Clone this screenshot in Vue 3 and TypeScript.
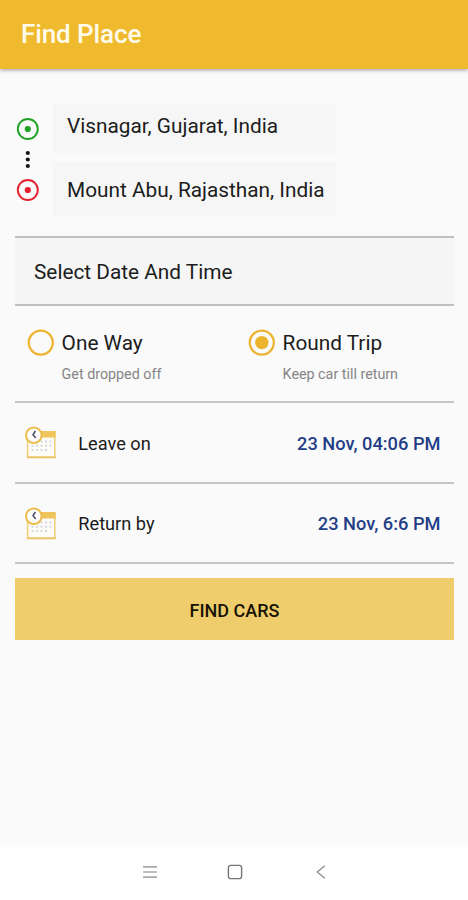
<script setup lang="ts">
import { ref } from 'vue'

interface TripOption { id: string; title: string; hint: string }
interface Schedule { label: string; value: string }

const origin = 'Visnagar, Gujarat, India'
const destination = 'Mount Abu, Rajasthan, India'
const trips: TripOption[] = [
  { id: 'one', title: 'One Way', hint: 'Get dropped off' },
  { id: 'round', title: 'Round Trip', hint: 'Keep car till return' },
]
const schedules: Schedule[] = [
  { label: 'Leave on', value: '23 Nov, 04:06 PM' },
  { label: 'Return by', value: '23 Nov, 6:6 PM' },
]
const selected = ref('round')
const dotColumns = [0, 1, 2, 3, 4]
</script>

<template>
  <div class="screen">
    <header class="bar"><h1>Find Place</h1></header>
    <main>
      <section class="route">
        <svg class="markers" width="26" height="90" viewBox="0 0 26 90">
          <g fill="none" stroke-width="1.9">
            <circle cx="12.8" cy="15" r="10" stroke="#1fa324" />
            <circle cx="12.8" cy="76" r="10" stroke="#e3202b" />
          </g>
          <circle cx="12.8" cy="15" r="3.1" fill="#1fa324" />
          <circle cx="12.8" cy="76" r="3.1" fill="#e3202b" />
          <g fill="#151515">
            <circle cx="12.8" cy="39" r="2.1" />
            <circle cx="12.8" cy="45.5" r="2.1" />
            <circle cx="12.8" cy="52" r="2.1" />
          </g>
        </svg>
        <div class="places">
          <div class="place from"><span>{{ origin }}</span></div>
          <div class="place to"><span>{{ destination }}</span></div>
        </div>
      </section>

      <h2 class="heading"><span>Select Date And Time</span></h2>

      <section class="trips">
        <div v-for="t in trips" :key="t.id" class="trip" @click="selected = t.id">
          <svg width="28" height="28" viewBox="0 0 28 28">
            <circle cx="13.8" cy="13.6" r="12" fill="none" stroke="#ecb432" stroke-width="2.3" />
            <circle v-if="selected === t.id" cx="13.8" cy="13.6" r="6.7" fill="#ecb42c" />
          </svg>
          <div class="trip-text">
            <span class="title">{{ t.title }}</span>
            <span class="hint">{{ t.hint }}</span>
          </div>
        </div>
      </section>

      <section v-for="s in schedules" :key="s.label" class="schedule">
        <svg width="32" height="34" viewBox="0 0 32 34">
          <rect x="2.6" y="6" width="27.2" height="25.5" fill="#fdfcf8" stroke="#efcf7d" stroke-width="1.6" />
          <rect x="2.6" y="5" width="28" height="6.5" fill="#efc45c" />
          <path d="M2 31.2H30.6" stroke="#eac25f" stroke-width="1.6" />
          <g fill="#d5d6e1">
            <template v-for="c in dotColumns" :key="c">
              <rect v-if="c > 1" :x="6.5 + c * 4.5" y="14.5" width="2" height="2" />
              <rect :x="6.5 + c * 4.5" y="18.7" width="2" height="2" />
              <rect v-if="c < 4" :x="6.5 + c * 4.5" y="23" width="2" height="2" />
            </template>
          </g>
          <circle cx="8.8" cy="9.3" r="7.8" fill="#fefefe" stroke="#ecbd4c" stroke-width="2" />
          <path d="M10.4 5L8 8.8L10.8 12" fill="none" stroke="#4b506b" stroke-width="1.5" />
        </svg>
        <span class="label">{{ s.label }}</span>
        <span class="value">{{ s.value }}</span>
      </section>

      <button class="find"><span>FIND CARS</span></button>
    </main>
    <nav class="system">
      <svg width="14" height="14" viewBox="0 0 14 14"><path d="M0 1.8H14M0 7H14M0 12.2H14" stroke="#aaa" stroke-width="1.7" /></svg>
      <svg class="home" width="16" height="16" viewBox="0 0 16 16"><rect x="1.4" y="1.4" width="13.2" height="13.2" rx="2.4" fill="none" stroke="#777" stroke-width="1.4" /></svg>
      <svg class="back" width="10" height="14" viewBox="0 0 10 14"><path d="M8.8 .7L1.3 7L8.8 13.3" fill="none" stroke="#929292" stroke-width="1.4" /></svg>
    </nav>
  </div>
</template>

<style>
body { margin: 0; }
</style>

<style scoped>
.screen {
  width: 468px; height: 900px; display: flex; flex-direction: column;
  background: #fafafa; color: #1c1c1c; font-family: Roboto, "Liberation Sans", sans-serif;
}
.bar {
  height: 69px; flex: none; box-sizing: border-box; padding: 19px 21px 0;
  background: #efba2d; box-shadow: 0 1px 4px rgba(60, 55, 75, .5);
}
h1 { margin: 0; font-size: 26px; line-height: 30px; font-weight: 500; color: #fffbea; letter-spacing: -.1px; }
main { flex: 1; padding: 35px 14px 0 15px; }
.route { display: flex; height: 132px; }
.markers { margin-top: 10px; flex: none; }
.places { margin-left: 12px; display: flex; flex-direction: column; gap: 9px; width: 283px; }
.place { background: #f6f6f6; padding-left: 14px; font-size: 20.8px; white-space: nowrap; }
.from { height: 49px; line-height: 45px; }
.to { height: 54px; line-height: 57px; }
.heading {
  margin: 0; height: 70px; box-sizing: border-box; border: solid #c0c0c0; border-width: 2px 0;
  background: #f5f5f5; font-size: 20.8px; font-weight: 400; line-height: 68px; padding-left: 19px;
}
.trips {
  height: 97px; box-sizing: border-box; border-bottom: 2px solid #c5c5c5; display: grid;
  grid-template-columns: 221px 1fr; padding: 23px 0 0 12px;
}
.trip { display: flex; gap: 6.6px; }
.trip-text { display: flex; flex-direction: column; white-space: nowrap; }
.title { font-size: 20.8px; line-height: 29px; }
.hint { font-size: 14.3px; line-height: 18px; margin-top: 7px; color: #858585; }
.schedule {
  height: 80.5px; box-sizing: border-box; border-bottom: 2px solid #c5c5c5;
  display: flex; align-items: center; padding: 2px 13.5px 0 10px;
}
.label { margin-left: 21.3px; font-size: 18.2px; }
.value { margin-left: auto; font-size: 18.25px; font-weight: 500; color: #233e87; }
.find {
  display: block; width: 100%; height: 62px; margin: 14px 0 0; padding: 2px 0 0; border: 0;
  background: #f0cd6c; color: #171306; font: 500 18px Roboto, sans-serif;
}
.system {
  height: 56px; flex: none; display: flex; align-items: center;
  padding-left: 143px; background: #fefefe;
}
.home { margin-left: 69.5px; }
.back { margin-left: 73.5px; }
</style>
